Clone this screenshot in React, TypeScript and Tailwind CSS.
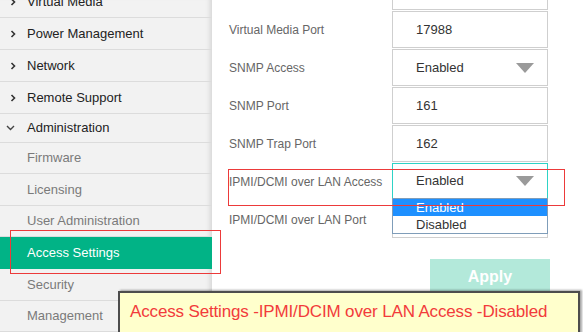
import React from 'react';

const font = "font-['Liberation_Sans',Arial,sans-serif]";

function ChevronRight() {
  return (
    <svg width="6" height="8" viewBox="0 0 6 8" className="ml-[10px]">
      <path d="M1.5 1 L4.5 4 L1.5 7" fill="none" stroke="#333" strokeWidth="1.6" />
    </svg>
  );
}

function ChevronDown() {
  return (
    <svg width="9" height="6" viewBox="0 0 9 6" className="ml-[6px]">
      <path d="M1 1 L4.5 4.5 L8 1" fill="none" stroke="#444" strokeWidth="1.4" />
    </svg>
  );
}

function Caret() {
  return (
    <svg width="18" height="10" viewBox="0 0 18 10">
      <polygon points="0,0 18,0 9,10" fill="#9a9a9a" />
    </svg>
  );
}

type NavItem = { label: string; kind: 'top' | 'open' | 'sub' | 'active'; h: string };

const nav: NavItem[] = [
  { label: 'Virtual Media', kind: 'top', h: 'h-[32px]' },
  { label: 'Power Management', kind: 'top', h: 'h-[32px]' },
  { label: 'Network', kind: 'top', h: 'h-[32px]' },
  { label: 'Remote Support', kind: 'top', h: 'h-[32px]' },
  { label: 'Administration', kind: 'open', h: 'h-[29px]' },
  { label: 'Firmware', kind: 'sub', h: 'h-[31px]' },
  { label: 'Licensing', kind: 'sub', h: 'h-[32px]' },
  { label: 'User Administration', kind: 'sub', h: 'h-[31px]' },
  { label: 'Access Settings', kind: 'active', h: 'h-[32px]' },
  { label: 'Security', kind: 'sub', h: 'h-[32px]' },
  { label: 'Management', kind: 'sub', h: 'h-[31px]' },
];

function Sidebar() {
  return (
    <div className="w-[212px] flex-none bg-[#f2f2f2] shadow-[inset_-6px_0_5px_-4px_rgba(0,0,0,0.12)] overflow-hidden">
      <div className="-mt-[14px] flex flex-col">
        {nav.map((n) => (
          <div
            key={n.label}
            className={
              'flex items-center text-[13px] ' +
              n.h +
              (n.kind === 'active' ? ' bg-[#01b386] text-white' : ' border-b border-[#dcdcdc]') +
              (n.kind === 'sub' ? ' text-[#7a7a7a]' : '') +
              (n.kind === 'top' || n.kind === 'open' ? ' text-[#222]' : '')
            }
          >
            <div className="w-[27px] flex-none flex items-center">
              {n.kind === 'top' && <ChevronRight />}
              {n.kind === 'open' && <ChevronDown />}
            </div>
            <span>{n.label}</span>
          </div>
        ))}
      </div>
    </div>
  );
}

type Row = { label: string; value: string; select?: boolean };

const rows: Row[] = [
  { label: '', value: '' },
  { label: 'Virtual Media Port', value: '17988' },
  { label: 'SNMP Access', value: 'Enabled', select: true },
  { label: 'SNMP Port', value: '161' },
  { label: 'SNMP Trap Port', value: '162' },
];

function Content() {
  return (
    <div className="flex-1 pl-[17px] overflow-hidden">
      <div className="-mt-[27px] flex flex-col gap-[1px]">
        {rows.map((r, i) => (
          <div key={i} className="flex items-center h-[37px]">
            <div className="w-[163px] flex-none text-[12px] text-[#666]">{r.label}</div>
            <div className="w-[156px] h-full border border-[#cfcfcf] flex items-center justify-between pl-[23px] pr-[13px] text-[13px] text-[#333]">
              <span>{r.value}</span>
              {r.select && <Caret />}
            </div>
          </div>
        ))}
        <div className="flex items-center h-[37px]">
          <div className="w-[163px] flex-none text-[12px] text-[#666]">IPMI/DCMI over LAN Access</div>
          <div className="relative w-[156px] h-full border border-[#2ed3c6] border-b-2 flex items-center justify-between pl-[23px] pr-[13px] text-[13px] text-[#333]">
            <span>Enabled</span>
            <Caret />
            <div className="absolute left-[-1px] top-full w-[156px] border border-[#7f9db9] bg-white z-10 text-[13px] leading-[17px]">
              <div className="bg-[#1e90ff] text-white pl-[23px] h-[17px]">Enabled</div>
              <div className="text-[#333] pl-[23px] h-[17px]">Disabled</div>
            </div>
          </div>
        </div>
        <div className="flex items-center h-[37px]">
          <div className="w-[163px] flex-none text-[12px] text-[#666]">IPMI/DCMI over LAN Port</div>
          <div className="w-[156px] h-full border border-[#cfcfcf]" />
        </div>
        <div className="pl-[201px] mt-[20px]">
          <div className="w-[120px] h-[36px] bg-[#b3e9da] text-white text-[16px] font-bold flex items-center justify-center">
            Apply
          </div>
        </div>
      </div>
    </div>
  );
}

export default function App() {
  return (
    <div className={'relative w-[583px] h-[332px] overflow-hidden bg-white flex ' + font}>
      <Sidebar />
      <Content />

      {/* annotation boxes */}
      <div className="absolute left-[10px] top-[230px] w-[211px] h-[44px] border border-[#ec3a3a]" />
      <div className="absolute left-[228px] top-[169px] w-[337px] h-[37px] border border-[#ec3a3a] z-20" />

      <div className="absolute left-[118px] top-[291px] w-[462px] h-[44px] bg-[#ffffcc] border-2 border-[#4d4d4d] shadow-[2px_-1px_2px_rgba(0,0,0,0.35)] z-30 flex items-start pl-[10px] pt-[9px]">
        <span className="text-[17px] text-[#f23b3b] tracking-[-0.15px] leading-[20px]">
          Access Settings -IPMI/DCIM over LAN Access -Disabled
        </span>
      </div>
    </div>
  );
}
